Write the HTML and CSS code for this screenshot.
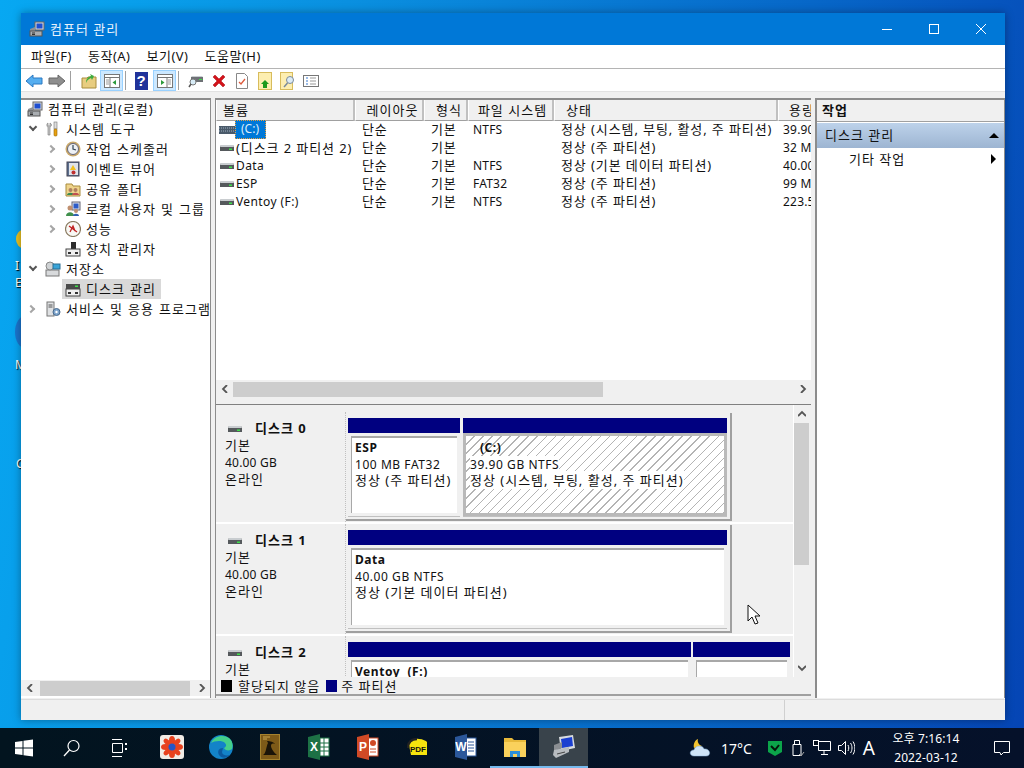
FILE: index.html
```html
<!DOCTYPE html>
<html lang="ko">
<head>
    <meta charset="UTF-8">
    <title>컴퓨터 관리</title>
    <link rel="stylesheet" href="styles.css">
</head>
<body>
    <svg class="defs" width="0" height="0">
        <symbol id="i-disk" viewBox="0 0 16 16">
            <path d="M2 5h12l1 2v4H1V7z" fill="#55595c"/>
            <path d="M2 5h12l1 2H1z" fill="#c9cdd0"/>
            <rect x="10" y="8.5" width="3" height="1.5" fill="#3fe04a"/>
        </symbol>
        <symbol id="i-pc" viewBox="0 0 16 16">
            <rect x="6" y="1" width="9" height="8" fill="#d5d8dc" stroke="#666"/>
            <rect x="7.5" y="2.5" width="6" height="5" fill="#1f4fd0"/>
            <path d="M1 8l5-2v6H1z" fill="#8d9196"/>
            <rect x="1" y="10" width="12" height="5" fill="#a9adb1" stroke="#555"/>
            <path d="M3 12h3M3 13.5h3" stroke="#333"/>
        </symbol>
    </svg>

    <div class="desk-icon desk-a"><span class="leaf"></span><span class="desk-txt">I<br>E</span></div>
    <div class="desk-icon desk-b"><span class="orb"></span><span class="desk-txt">M</span></div>
    <div class="desk-icon desk-c"><span class="desk-txt">C</span></div>

    <div class="window">
        <div class="titlebar">
            <svg class="title-icon" width="16" height="16"><use href="#i-pc"/></svg>
            <span class="title-text">컴퓨터 관리</span>
            <div class="win-btns">
                <span class="win-btn"><svg width="12" height="12"><path d="M1 6.5h10" stroke="#fff"/></svg></span>
                <span class="win-btn"><svg width="12" height="12"><rect x="1.5" y="1.5" width="9" height="9" fill="none" stroke="#fff"/></svg></span>
                <span class="win-btn"><svg width="12" height="12"><path d="M1 1l10 10M11 1L1 11" stroke="#fff"/></svg></span>
            </div>
        </div>

        <div class="menubar">
            <span>파일(F)</span><span>동작(A)</span><span>보기(V)</span><span>도움말(H)</span>
        </div>

        <div class="toolbar">
            <span class="tool"><svg width="18" height="16"><path d="M1 8l7-6v3h9v6H8v3z" fill="#55aef0" stroke="#2b78c2"/></svg></span>
            <span class="tool"><svg width="18" height="16"><path d="M17 8l-7-6v3H1v6h9v3z" fill="#8e8e8e" stroke="#666"/></svg></span>
            <span class="tool-sep sep-a"></span>
            <span class="tool"><svg width="16" height="16"><path d="M1 5h5l1-1h8v11H1z" fill="#e8cd80" stroke="#a98c3c"/><path d="M5 10c0-4 2-6 5-7l-1-2 4 2-2 4-1-2c-2 1-4 2-5 5z" fill="#3cab3c"/></svg></span>
            <span class="tool on"><svg width="16" height="14"><rect x=".5" y=".5" width="15" height="13" fill="#fff" stroke="#777"/><path d="M1 3.5h14M6 4v9" stroke="#777"/><path d="M2 6h3M2 8h3M2 10h3" stroke="#999"/><path d="M12 6v5L8.500 8.500z" fill="#2a9a3a"/></svg></span>
            <span class="tool-sep"></span>
            <span class="tool"><svg width="13" height="18"><rect width="13" height="18" fill="#20329a"/><text x="6.500" y="14" class="q">?</text></svg></span>
            <span class="tool on"><svg width="16" height="14"><rect x=".5" y=".5" width="15" height="13" fill="#fff" stroke="#777"/><path d="M1 3.500h14M10 4v9" stroke="#777"/><path d="M11 6h3M11 8h3M11 10h3" stroke="#999"/><path d="M4 6v5l3.500-2.500z" fill="#2a9a3a"/></svg></span>
            <span class="tool-sep sep-c"></span>
            <span class="tool"><svg width="16" height="16"><path d="M3 4h12v5H3z" fill="#6d7175"/><path d="M3 4h12l-1-1H4z" fill="#c9cdd0"/><rect x="11" y="6" width="3" height="1" fill="#3fe04a"/><circle cx="5" cy="9" r="3" fill="#d8ecf7" stroke="#777"/><path d="M3 11l-2 3" stroke="#555" stroke-width="1.500"/></svg></span>
            <span class="tool"><svg width="16" height="16"><path d="M2 4l2-2 4 4 4-4 2 2-4 4 4 4-2 2-4-4-4 4-2-2 4-4z" fill="#d3121a" stroke="#a80d12" stroke-width=".5"/></svg></span>
            <span class="tool"><svg width="14" height="16"><path d="M1.500.5h8l3 3v12h-11z" fill="#fff" stroke="#888"/><path d="M4 9l2 2 4-5" fill="none" stroke="#dd5a3c" stroke-width="1.300"/></svg></span>
            <span class="tool"><svg width="14" height="18"><rect x=".5" y=".5" width="13" height="17" fill="#fdeeb0" stroke="#d8bc5c"/><path d="M7 8l4 4H9v4H5v-4H3z" fill="#1c9a1c"/></svg></span>
            <span class="tool"><svg width="16" height="18"><rect x=".5" y=".5" width="12" height="17" fill="#fdeeb0" stroke="#d8bc5c"/><circle cx="10" cy="8" r="3.500" fill="#dcebf5" stroke="#7a8a99"/><path d="M7.500 11L4 15" stroke="#7a8a99" stroke-width="1.500"/></svg></span>
            <span class="tool"><svg width="16" height="12"><rect x=".5" y=".5" width="15" height="11" fill="#fff" stroke="#777"/><path d="M3 3h2M3 6h2M3 9h2" stroke="#3a7bd0" stroke-width="1.200"/><path d="M7 3h6M7 6h6M7 9h6" stroke="#999"/></svg></span>
        </div>

        <div class="panes">
            <div class="pane tree-pane">
                <div class="tree">
                    <div class="node lv0"><svg class="ico" width="16" height="16"><use href="#i-pc"/></svg><span>컴퓨터 관리(로컬)</span></div>
                    <div class="node lv1"><i class="tw down"></i>
                        <svg class="ico" width="16" height="16"><path d="M3 2c-2 1-1 4 0 4v8h2V6c2-1 2-3 0-4v3H3z" fill="#c8c8c8" stroke="#777" stroke-width=".6"/><rect x="9" y="1" width="3" height="7" fill="#ddd" stroke="#777" stroke-width=".6"/><rect x="9" y="8" width="3" height="7" rx="1" fill="#e8a010" stroke="#946404" stroke-width=".6"/></svg><span>시스템 도구</span></div>
                    <div class="node lv2"><i class="tw right"></i>
                        <svg class="ico" width="16" height="16"><circle cx="8" cy="8" r="7.500" fill="#c9a86a"/><circle cx="8" cy="8" r="5.500" fill="#eef1f5" stroke="#667"/><path d="M8 4v4l3 1" fill="none" stroke="#345" stroke-width="1.200"/></svg><span>작업 스케줄러</span></div>
                    <div class="node lv2"><i class="tw right"></i>
                        <svg class="ico" width="16" height="16"><rect x="2" y="1" width="12" height="14" fill="#5c7090" stroke="#445"/><rect x="4" y="2" width="9" height="12" fill="#dfe3ea"/><path d="M8 4l3 5H5z" fill="#f0c020"/><circle cx="8.500" cy="11.500" r="2" fill="#c03030"/></svg><span>이벤트 뷰어</span></div>
                    <div class="node lv2"><i class="tw right"></i>
                        <svg class="ico" width="16" height="16"><path d="M1 3h6l1 2h7v10H1z" fill="#efd48c" stroke="#a98c3c"/><circle cx="5.500" cy="9" r="2" fill="#b08060"/><path d="M2 14c0-3 7-3 7 0z" fill="#3a8a50"/><circle cx="10.500" cy="9" r="2" fill="#b08060"/><path d="M7 14c0-3 7-3 7 0z" fill="#c05050"/></svg><span>공유 폴더</span></div>
                    <div class="node lv2"><i class="tw right"></i>
                        <svg class="ico" width="16" height="16"><rect x="7" y="1" width="8" height="8" fill="#dfe3ea" stroke="#667"/><rect x="8.500" y="2.500" width="5" height="5" fill="#2d5cc8"/><circle cx="5" cy="7" r="2.500" fill="#c09070"/><path d="M1 15c0-5 8-5 8 0z" fill="#40904c"/><circle cx="11" cy="10" r="2" fill="#c09070"/><path d="M8 15c0-3 6-3 6 0z" fill="#3060b0"/></svg><span>로컬 사용자 및 그룹</span></div>
                    <div class="node lv2"><i class="tw right"></i>
                        <svg class="ico" width="16" height="16"><circle cx="8" cy="8" r="7.500" fill="#f8f8f4" stroke="#8a7a60" stroke-width="1.200"/><path d="M4 5l8 6M5 11l3-6 2 5" fill="none" stroke="#c02020" stroke-width="1.300"/></svg><span>성능</span></div>
                    <div class="node lv2 no-tw"><i class="tw"></i>
                        <svg class="ico" width="16" height="16"><rect x="6" y="1" width="5" height="7" fill="#2c2c2c"/><rect x="1" y="8" width="14" height="7" fill="#f0f0f0" stroke="#444"/><rect x="3" y="11" width="3" height="2" fill="#333"/><rect x="10" y="11" width="3" height="2" fill="#333"/></svg><span>장치 관리자</span></div>
                    <div class="node lv1"><i class="tw down"></i>
                        <svg class="ico" width="16" height="16"><rect x="1" y="9" width="13" height="6" fill="#d8dadc" stroke="#777"/><circle cx="5" cy="5" r="4" fill="#cfd2d4" stroke="#888"/><rect x="8" y="3" width="7" height="5" fill="#39a4d8" stroke="#2a6f94"/></svg><span>저장소</span></div>
                    <div class="node lv2 no-tw"><i class="tw"></i><span class="sel">
                        <svg class="ico" width="16" height="16"><path d="M1 3h14v5H1z" fill="#4a4a4a"/><rect x="10" y="4.500" width="3" height="1.500" fill="#3fe04a"/><rect x="1" y="8" width="14" height="7" fill="#f0f0f0" stroke="#444"/><rect x="3" y="11" width="3" height="2" fill="#333"/><rect x="10" y="11" width="3" height="2" fill="#333"/></svg><span>디스크 관리</span></span></div>
                    <div class="node lv1"><i class="tw right"></i>
                        <svg class="ico" width="16" height="16"><rect x="2" y="1" width="7" height="14" fill="#dfe1e3" stroke="#777"/><path d="M3.500 4h4M3.500 6h4" stroke="#555"/><circle cx="11.500" cy="11" r="3.500" fill="#7da4cc" stroke="#48698c"/><circle cx="11.500" cy="11" r="1.200" fill="#fff"/></svg><span>서비스 및 응용 프로그램</span></div>
                </div>
                <div class="hscroll">
                    <span class="arr"><svg width="8" height="8"><path d="M6 0L2 4l4 4" fill="none" stroke="#555" stroke-width="1.800"/></svg></span>
                    <span class="track"><span class="thumb tree-thumb"></span></span>
                    <span class="arr"><svg width="8" height="8"><path d="M2 0l4 4-4 4" fill="none" stroke="#555" stroke-width="1.800"/></svg></span>
                </div>
            </div>

            <div class="pane mid-pane">
                <div class="list">
                    <div class="vol-head">
                        <span>볼륨</span><span class="ctr">레이아웃</span><span class="ctr">형식</span><span class="ctr">파일 시스템</span><span class="pad">상태</span><span class="cap">용량</span>
                    </div>
                    <div class="vol-row">
                        <span class="vol"><svg class="hatch-ico" width="16" height="8"><rect width="16" height="8" fill="#4a5a6a"/><path d="M0 2h16M0 5h16" stroke="#9fb0c0" stroke-dasharray="1 1"/></svg><em class="vol-sel">(C:)</em></span><span>단순</span><span>기본</span><span class="en">NTFS</span><span>정상 (시스템, 부팅, 활성, 주 파티션)</span><span class="en">39.90 GB</span>
                    </div>
                    <div class="vol-row">
                        <span class="vol"><svg width="16" height="16"><use href="#i-disk"/></svg>(디스크 2 파티션 2)</span><span>단순</span><span>기본</span><span class="en"></span><span>정상 (주 파티션)</span><span class="en">32 MB</span>
                    </div>
                    <div class="vol-row">
                        <span class="vol en"><svg width="16" height="16"><use href="#i-disk"/></svg>Data</span><span>단순</span><span>기본</span><span class="en">NTFS</span><span>정상 (기본 데이터 파티션)</span><span class="en">40.00 GB</span>
                    </div>
                    <div class="vol-row">
                        <span class="vol en"><svg width="16" height="16"><use href="#i-disk"/></svg>ESP</span><span>단순</span><span>기본</span><span class="en">FAT32</span><span>정상 (주 파티션)</span><span class="en">99 MB</span>
                    </div>
                    <div class="vol-row">
                        <span class="vol en"><svg width="16" height="16"><use href="#i-disk"/></svg>Ventoy (F:)</span><span>단순</span><span>기본</span><span class="en">NTFS</span><span>정상 (주 파티션)</span><span class="en">223.57 GB</span>
                    </div>
                </div>
                <div class="hscroll">
                    <span class="arr"><svg width="8" height="8"><path d="M6 0L2 4l4 4" fill="none" stroke="#555" stroke-width="1.800"/></svg></span>
                    <span class="track"><span class="thumb list-thumb"></span></span>
                    <span class="arr"><svg width="8" height="8"><path d="M2 0l4 4-4 4" fill="none" stroke="#555" stroke-width="1.800"/></svg></span>
                </div>
                <div class="splitter"></div>

                <div class="disk-view">
                    <div class="disks">
                        <div class="disk d0">
                            <div class="disk-info">
                                <div class="disk-name"><svg width="16" height="16"><use href="#i-disk"/></svg><b>디스크 0</b></div>
                                <div>기본</div><div class="en">40.00 GB</div><div>온라인</div>
                            </div>
                            <div class="parts">
                                <div class="part p-esp">
                                    <div class="bar"></div>
                                    <div class="box"><div class="box-in">
                                        <b class="en">ESP</b><span class="en">100 MB FAT32</span><span>정상 (주 파티션)</span>
                                    </div></div>
                                </div>
                                <div class="part p-c">
                                    <div class="bar"></div>
                                    <div class="box picked"><div class="box-in hatch">
                                        <b class="en c-name">(C:)</b><span class="en"><i>39.90 GB NTFS</i></span><span><i>정상 (시스템, 부팅, 활성, 주 파티션)</i></span>
                                    </div></div>
                                </div>
                            </div>
                        </div>
                        <div class="disk d1">
                            <div class="disk-info">
                                <div class="disk-name"><svg width="16" height="16"><use href="#i-disk"/></svg><b>디스크 1</b></div>
                                <div>기본</div><div class="en">40.00 GB</div><div>온라인</div>
                            </div>
                            <div class="parts">
                                <div class="part p-data">
                                    <div class="bar"></div>
                                    <div class="box"><div class="box-in">
                                        <b class="en">Data</b><span class="en">40.00 GB NTFS</span><span>정상 (기본 데이터 파티션)</span>
                                    </div></div>
                                </div>
                            </div>
                        </div>
                        <div class="disk d2">
                            <div class="disk-info">
                                <div class="disk-name"><svg width="16" height="16"><use href="#i-disk"/></svg><b>디스크 2</b></div>
                                <div>기본</div>
                            </div>
                            <div class="parts">
                                <div class="part p-vt">
                                    <div class="bar"></div>
                                    <div class="box"><div class="box-in"><b class="en">Ventoy&nbsp; (F:)</b></div></div>
                                </div>
                                <div class="part p-small">
                                    <div class="bar"></div>
                                    <div class="box"><div class="box-in"></div></div>
                                </div>
                            </div>
                        </div>
                    </div>
                    <div class="vscroll">
                        <span class="arr"><svg width="8" height="8"><path d="M0 6l4-4 4 4" fill="none" stroke="#555" stroke-width="1.800"/></svg></span>
                        <span class="vtrack"><span class="vthumb"></span></span>
                        <span class="arr"><svg width="8" height="8"><path d="M0 2l4 4 4-4" fill="none" stroke="#555" stroke-width="1.800"/></svg></span>
                    </div>
                </div>
                <div class="legend">
                    <i class="sw black"></i><span>할당되지 않음</span><i class="sw navy"></i><span>주 파티션</span>
                </div>
            </div>

            <div class="pane act-pane">
                <div class="act-head"><b>작업</b></div>
                <div class="act-sec"><span>디스크 관리</span><i class="tri-up"></i></div>
                <div class="act-item"><span>기타 작업</span><i class="tri-right"></i></div>
            </div>
        </div>

        <div class="statusbar"><span class="st-a"></span><span class="st-b"></span></div>
    </div>

    <svg class="cursor" width="14" height="22"><path d="M1 1v16l4-4 3 7 3-1-3-7h5z" fill="#fff" stroke="#111"/></svg>

    <div class="taskbar">
        <span class="tb-btn"><svg width="18" height="18"><path d="M0 3l7.500-1v6.500H0zM8.500 1.800L18 .5v8H8.500zM0 9.500h7.500V16L0 15zM8.500 9.500H18v8l-9.500-1.300z" fill="#fff"/></svg></span>
        <span class="tb-btn"><svg width="18" height="18"><circle cx="10.500" cy="7" r="5.500" fill="none" stroke="#fff" stroke-width="1.200"/><path d="M6.500 11L1 17" stroke="#fff" stroke-width="1.300"/></svg></span>
        <span class="tb-btn"><svg width="16" height="18"><path d="M0 .5h10M0 17.500h10M.5 4.500h10v9H.5z" fill="none" stroke="#fff"/><rect x="13" y="4" width="2" height="2" fill="#fff"/><rect x="13" y="9" width="2" height="2" fill="#fff"/></svg></span>
        <span class="tb-app first"><svg width="24" height="24"><rect width="24" height="24" rx="3" fill="#f1ece6"/><g fill="#e8421e"><ellipse cx="12" cy="5.500" rx="3" ry="4.500"/><ellipse cx="12" cy="18.500" rx="3" ry="4.500"/><ellipse cx="5.500" cy="12" rx="4.500" ry="3"/><ellipse cx="18.500" cy="12" rx="4.500" ry="3"/><ellipse cx="7" cy="7" rx="2.500" ry="4" transform="rotate(-45 7 7)"/><ellipse cx="17" cy="17" rx="2.500" ry="4" transform="rotate(-45 17 17)"/><ellipse cx="17" cy="7" rx="2.500" ry="4" transform="rotate(45 17 7)"/><ellipse cx="7" cy="17" rx="2.500" ry="4" transform="rotate(45 7 17)"/></g><circle cx="12" cy="12" r="3.500" fill="#2456c8"/></svg></span>
        <span class="tb-app"><svg width="24" height="24"><circle cx="12" cy="12" r="12" fill="#1383c8"/><path d="M2 8C5 1 14-1 20 3c4 3 4 8 3 11-2 2-7 2-8-1 2-1 3-3 1-5-3-3-11-2-14 0z" fill="#44cf8a"/><path d="M14 13c-4 0-6 3-4 7 2 3 7 4 11 0-4 1-8 0-8-3z" fill="#0c5aa0"/></svg></span>
        <span class="tb-app"><svg width="20" height="26"><rect x=".5" y=".5" width="19" height="25" fill="#7d5a18" stroke="#a4822e"/><path d="M3 21c3-1 3-8 5-12l-1-2c3 0 7 1 8 3-3-1-4 0-4 2s3 7 6 9z" fill="#1a1408"/><path d="M3 3h7M3 5h4" stroke="#c9a650"/></svg></span>
        <span class="tb-app"><svg width="22" height="26"><rect x="8" y="4" width="13" height="18" fill="#fff" stroke="#1d7145"/><path d="M12 4v18M16 4v18M8 9h13M8 13h13M8 17h13" stroke="#1d7145"/><path d="M0 3l12-3v26L0 23z" fill="#1d7145"/><text x="6" y="17" class="ap">X</text></svg></span>
        <span class="tb-app"><svg width="22" height="26"><rect x="8" y="4" width="13" height="18" fill="#fff" stroke="#d04a26"/><path d="M13 15h6M13 18h6" stroke="#d04a26"/><circle cx="16" cy="9" r="3" fill="#d04a26"/><path d="M0 3l12-3v26L0 23z" fill="#d04a26"/><text x="6" y="17" class="ap">P</text></svg></span>
        <span class="tb-app"><svg width="20" height="18"><path d="M2 7c0-5 6-7 10-6 4 0 7 2 8 3v13H4z" fill="#f6e30e"/><path d="M1 10C1 4 5 1 10 1" fill="none" stroke="#222" stroke-width="2.500"/><text x="11" y="14" class="pdf">PDF</text></svg></span>
        <span class="tb-app"><svg width="22" height="26"><rect x="8" y="4" width="13" height="18" fill="#fff" stroke="#2b579a"/><path d="M13 8h6M13 11h6M13 14h6M13 17h6" stroke="#2b579a"/><path d="M0 3l12-3v26L0 23z" fill="#2b579a"/><text x="6" y="17" class="ap">W</text></svg></span>
        <span class="tb-app open"><svg width="22" height="20"><path d="M0 1h8l2 2h12v4H0z" fill="#e8b93a"/><rect y="5" width="22" height="15" fill="#fad15c"/><path d="M6 20v-6h10v6h-3v-3H9v3z" fill="#2d8fd8"/></svg></span>
        <span class="tb-app active"><svg width="26" height="26"><path d="M8 3l14-2 2 13-14 3z" fill="#d8dce0"/><path d="M10 5l11-2 1 9-11 2z" fill="#1b3fd0"/><path d="M3 11l8-3v6l-8 3z" fill="#8a8e92"/><path d="M3 16l15-3v5L5 24l-3-3z" fill="#b8bcc0"/><path d="M6 20l8-2" stroke="#444"/></svg></span>

        <div class="tray">
            <span class="tray-ico"><svg width="24" height="22"><path d="M9 2c-3 1-5 5-4 9l8-2c-3-1-5-4-4-7z" fill="#f2c32f"/><path d="M5 19c-5 0-5-6 0-6 1-5 9-5 10-1 6-1 8 7 2 7z" fill="#cfe4f7" stroke="#8ab4dc" stroke-width=".5"/></svg></span>
            <span class="temp">17°C</span>
            <span class="tray-ico t-shield"><svg width="14" height="16"><path d="M0 1h14v11l-7 4-7-4z" fill="#0ca44a"/><path d="M3 6l4 4 4-5" fill="none" stroke="#04150a" stroke-width="2"/></svg></span>
            <span class="tray-ico t-usb"><svg width="14" height="18"><path d="M3.500 1.500h5v4h-5zM2 5.500h8v11H2z" fill="none" stroke="#fff"/><path d="M8 15l2 2 3-4" fill="none" stroke="#aaa"/></svg></span>
            <span class="tray-ico t-net"><svg width="18" height="16"><path d="M5.500 1.500h12v9h-12zM11 11v3M8 14.500h7" fill="none" stroke="#fff"/><rect x=".5" y=".5" width="5" height="5" fill="#06101e" stroke="#fff"/></svg></span>
            <span class="tray-ico t-vol"><svg width="17" height="14"><path d="M.5 4.500h3l4-4v13l-4-4h-3z" fill="none" stroke="#fff"/><path d="M10 4c1 2 1 4 0 6M12.500 2c2 3 2 7 0 10M15 .5c2.500 4 2.500 9 0 13" fill="none" stroke="#fff"/></svg></span>
            <span class="ime">A</span>
            <div class="clock"><span>오후 7:16:14</span><span>2022-03-12</span></div>
            <span class="tray-ico t-note"><svg width="16" height="15"><path d="M.5.500h15v11H9.500L7 14l-1-2.500H.5z" fill="none" stroke="#fff"/></svg></span>
        </div>
    </div>
</body>
</html>
```
FILE: styles.css
```css
html, body {
    margin: 0;
    height: 100%;
}

body {
    width: 1024px;
    height: 768px;
    overflow: hidden;
    position: relative;
    font-family: "Noto Sans", "Noto Sans CJK KR", sans-serif;
    font-size: 13px;
    letter-spacing: 1px;
    color: #111;
    background: linear-gradient(100deg, #07a8f2 0%, #0a90e0 30%, #0767c8 70%, #0544b4 100%);
}

.defs {
    position: absolute;
}

.en {
    font-size: 12px;
    letter-spacing: 0.2px;
}

b.en {
    letter-spacing: 0.3px;
}

/* desktop scraps left of the window */
.desk-icon {
    position: absolute;
    left: 0;
    width: 21px;
    overflow: hidden;
    color: #fff;
    font-size: 12px;
    letter-spacing: 0;
    text-shadow: 1px 1px 1px #000;
}

.desk-a { top: 230px; height: 62px; }
.desk-b { top: 316px; height: 56px; }
.desk-c { top: 455px; height: 18px; }

.desk-txt {
    position: absolute;
    left: 15px;
    line-height: 17px;
}

.desk-a .desk-txt { top: 27px; }
.desk-b .desk-txt { top: 40px; }
.desk-c .desk-txt { top: 0; left: 16px; }

.leaf {
    position: absolute;
    left: 16px;
    top: 0;
    width: 14px;
    height: 18px;
    border-radius: 50%;
    background: #e8c020;
}

.orb {
    position: absolute;
    left: 15px;
    top: 0;
    width: 20px;
    height: 32px;
    border-radius: 50%;
    background: #1a74cc;
}

/* window */
.window {
    position: absolute;
    left: 21px;
    top: 13px;
    width: 984px;
    height: 707px;
    display: flex;
    flex-direction: column;
    background: #f0f0f0;
    box-shadow: 0 0 8px rgba(0, 0, 0, 0.35);
}

.titlebar {
    height: 32px;
    flex: none;
    display: flex;
    align-items: center;
    background: #0078d7;
    color: #fff;
}

.title-icon {
    margin: 0 5px 0 8px;
}

.title-text {
    flex: 1;
    color: #e8f2fb;
    padding-bottom: 2px;
}

.win-btns {
    display: flex;
    margin-right: 1px;
}

.win-btn {
    width: 47px;
    height: 32px;
    display: flex;
    align-items: center;
    justify-content: center;
}

.menubar {
    height: 21px;
    flex: none;
    display: flex;
    align-items: center;
    gap: 16px;
    padding-left: 10px;
    padding-bottom: 2px;
    background: #fff;
    border-bottom: 1px solid #b4b4b4;
    letter-spacing: 0.5px;
}

.toolbar {
    height: 22px;
    flex: none;
    display: flex;
    align-items: flex-start;
    padding-left: 1px;
    background: #fff;
    border-bottom: 1px solid #e2e2e2;
}

.tool {
    width: 23px;
    height: 21px;
    margin-top: 1px;
    padding-top: 1px;
    display: flex;
    align-items: center;
    justify-content: center;
    box-sizing: border-box;
}

.tool.on {
    background: #cce8ff;
    border: 1px solid #99d1ff;
}

.tool-sep {
    width: 1px;
    height: 19px;
    margin: 2px 4px 0 2px;
    background: #a0a0a0;
}

.sep-a { margin-right: 6px; }
.sep-c { margin-right: 5px; }

.q {
    font: bold 15px "Liberation Sans", sans-serif;
    fill: #fff;
    text-anchor: middle;
}

.panes {
    flex: 1;
    min-height: 0;
    display: flex;
    gap: 4px;
    padding-top: 6px;
    padding-bottom: 1px;
}

.pane {
    display: flex;
    flex-direction: column;
    box-sizing: border-box;
    background: #fff;
    border-top: 2px solid #8c8c8c;
    border-left: 1px solid #8c8c8c;
    overflow: hidden;
}

.tree-pane {
    width: 190px;
    border-left: 0;
    border-right: 1px solid #8c8c8c;
}

.mid-pane {
    width: 596px;
    background: #f0f0f0;
}

.act-pane {
    width: 190px;
    border-left: 2px solid #8c8c8c;
    border-right: 1px solid #8c8c8c;
}

/* tree */
.tree {
    flex: 1;
    overflow: hidden;
    margin-top: -1px;
    white-space: nowrap;
    word-spacing: 0.7px;
}

.node {
    height: 20px;
    display: flex;
    align-items: center;
}

.node > span,
.sel > span {
    padding-bottom: 2px;
}

.node .ico {
    flex: none;
    margin-right: 5px;
}

.lv0 { padding-left: 6px; }
.lv1 { padding-left: 7px; }
.lv2 { padding-left: 27px; }

.tw {
    flex: none;
    width: 11px;
    height: 11px;
    margin-right: 6px;
    position: relative;
}

.tw.down::after,
.tw.right::after {
    content: "";
    position: absolute;
    width: 6px;
    height: 6px;
    box-sizing: border-box;
    border-right: 2px solid #555;
    border-bottom: 2px solid #555;
}

.tw.down::after {
    left: 2px;
    top: 0;
    transform: rotate(45deg);
}

.tw.right::after {
    left: 0;
    top: 2px;
    border-color: #a6a6a6;
    transform: rotate(-45deg);
}

.node .sel {
    display: inline-flex;
    align-items: center;
    height: 20px;
    padding: 0 5px 0 3px;
    margin-left: -3px;
    background: #d9d9d9;
}

/* scrollbars */
.hscroll {
    height: 18px;
    flex: none;
    display: flex;
    align-items: center;
    background: #f0f0f0;
}

.tree-pane .hscroll {
    height: 16px;
    margin-bottom: 2px;
}

.arr {
    width: 17px;
    height: 16px;
    flex: none;
    display: flex;
    align-items: center;
    justify-content: center;
}

.track {
    flex: 1;
    height: 15px;
    display: block;
}

.thumb {
    display: block;
    height: 100%;
    background: #cdcdcd;
}

.tree-thumb { width: 150px; margin-left: 2px; }
.list-thumb { width: 370px; }

/* volume list */
.list {
    height: 280px;
    flex: none;
    overflow: hidden;
    background: #fff;
}

.vol-head,
.vol-row {
    display: grid;
    grid-template-columns: 139px 69px 44px 86px 224px 90px;
    white-space: nowrap;
}

.vol-head {
    height: 21px;
    align-items: center;
    background: #f0f0f0;
}

.vol-head span {
    height: 21px;
    line-height: 20px;
    box-sizing: border-box;
    padding-left: 6px;
    border-right: 2px solid #c0c0c0;
    border-bottom: 1px solid #a0a0a0;
    border-left: 1px solid #fff;
    overflow: hidden;
}

.vol-head .ctr {
    text-align: center;
    padding-left: 7px;
}

.vol-head .ctr:nth-child(4) {
    padding-left: 4px;
}

.vol-head .pad {
    padding-left: 11px;
}

.vol-head .cap {
    padding-left: 10px;
}

.vol-row {
    height: 18px;
    line-height: 18px;
    letter-spacing: 0.9px;
}

.vol-row span {
    padding-left: 7px;
    overflow: hidden;
}

.vol-row span:not(.en) {
    margin-top: -1px;
}

.vol-row span:nth-child(4) {
    padding-left: 5px;
}

.vol-row span:last-child {
    padding-left: 5px;
}

.vol-row .vol {
    display: flex;
    align-items: center;
    padding-left: 3px;
    margin-top: 0;
}

.vol.en {
    letter-spacing: 0.4px;
}

.vol svg {
    flex: none;
    margin-right: 1px;
}

.vol-sel {
    align-self: stretch;
    font-style: normal;
    font-size: 12px;
    letter-spacing: 0;
    background: #0078d7;
    color: #dcecfa;
    padding: 0 7px 0 6px;
    margin-left: -1px;
    outline: 1px dotted #e8a040;
    outline-offset: -1px;
}

.splitter {
    height: 6px;
    flex: none;
    background: #f0f0f0;
    border-bottom: 1px solid #808080;
}

/* disk map */
.disk-view {
    flex: 1;
    min-height: 0;
    display: flex;
    background: #f0f0f0;
}

.disks {
    flex: 1;
    overflow: hidden;
}

.disk {
    display: flex;
    height: 110px;
    border-bottom: 2px solid #fff;
}

.d0 {
    margin-top: 7px;
}

.disk-info {
    width: 130px;
    flex: none;
    box-sizing: border-box;
    padding: 5px 0 0 9px;
    line-height: 17px;
    border-right: 1px dotted #c0c0c0;
}

.disk-name {
    display: flex;
    align-items: center;
    height: 23px;
    gap: 12px;
    padding-left: 2px;
    margin-bottom: -3px;
}

.parts {
    width: 386px;
    height: 108px;
    margin-top: 1px;
    flex: none;
    display: flex;
    gap: 3px;
    box-sizing: border-box;
    padding: 5px 3px 2px 2px;
    border-right: 2px solid #a0a0a0;
    border-bottom: 2px solid #a0a0a0;
}

.part {
    display: flex;
    flex-direction: column;
}

.p-esp { width: 112px; flex: none; }
.p-c { width: 264px; flex: none; }
.p-data { width: 379px; flex: none; }
.p-vt { width: 343px; flex: none; }
.p-small { width: 97px; flex: none; }

.d2 .parts {
    width: 446px;
    gap: 2px;
    border: 0;
}

.bar {
    height: 15px;
    flex: none;
    background: #000080;
}

.box {
    flex: 1;
    padding: 3px;
    background: #f0f0f0;
    border-bottom: 1px solid #c0c0c0;
    min-height: 0;
}

.box-in {
    height: 100%;
    box-sizing: border-box;
    display: flex;
    flex-direction: column;
    padding: 1px 0 0 3px;
    line-height: 17px;
    background: #fff;
    border-top: 2px solid #a8a8a8;
    border-left: 1px solid #a8a8a8;
    white-space: nowrap;
}

.box-in .en {
    letter-spacing: 0.55px;
}

.box-in > span:last-child {
    margin-top: -1px;
}

.picked {
    background: #b9b9b9;
}

.box-in.hatch {
    border: 0;
    padding-left: 4px;
    padding-top: 3px;
    background: repeating-linear-gradient(135deg, #fff 0, #fff 5.4px, #b4b4b4 5.4px, #b4b4b4 6.4px);
}

.hatch span {
    align-self: flex-start;
}

.hatch i {
    font-style: normal;
    background: #fff;
}

.c-name {
    padding-left: 10px;
    align-self: flex-start;
}

.vscroll {
    width: 16px;
    flex: none;
    margin-right: 2px;
    display: flex;
    flex-direction: column;
    border-left: 1px solid #fff;
    box-sizing: border-box;
}

.vtrack {
    flex: 1;
    display: block;
}

.vthumb {
    display: block;
    height: 142px;
    background: #cdcdcd;
}

.vscroll .arr {
    height: 18px;
    width: 15px;
}

.legend {
    height: 19px;
    flex: none;
    margin-bottom: 2px;
    display: flex;
    align-items: center;
    padding-left: 5px;
    background: #f0f0f0;
    border-bottom: 2px solid #a0a0a0;
    box-sizing: border-box;
}

.sw {
    width: 11px;
    height: 12px;
    margin-right: 6px;
    display: block;
}

.sw.black { background: #000; }
.sw.navy { background: #000080; margin-left: 6px; margin-right: 4px; }

/* actions */
.act-head {
    height: 21px;
    line-height: 21px;
    padding-left: 5px;
    background: #f0f0f0;
    border-bottom: 1px solid #a0a0a0;
}

.act-sec {
    height: 25px;
    margin-top: 1px;
    display: flex;
    align-items: center;
    justify-content: space-between;
    padding: 0 4px 0 8px;
    background: linear-gradient(#bdd2ea, #9db5d2);
}

.act-sec span,
.act-item span {
    padding-bottom: 2px;
}

.tri-up {
    border-left: 5px solid transparent;
    border-right: 5px solid transparent;
    border-bottom: 5px solid #000;
    margin-right: 1px;
}

.act-item {
    height: 22px;
    display: flex;
    align-items: center;
    justify-content: space-between;
    padding: 0 8px 0 32px;
}

.tri-right {
    border-top: 5px solid transparent;
    border-bottom: 5px solid transparent;
    border-left: 5px solid #000;
}

.statusbar {
    height: 21px;
    flex: none;
    display: flex;
    background: #f0f0f0;
    border-top: 1px solid #dcdcdc;
    box-sizing: border-box;
}

.st-a {
    width: 763px;
    border-right: 1px solid #d0d0d0;
}

.cursor {
    position: absolute;
    left: 747px;
    top: 604px;
}

/* taskbar */
.taskbar {
    position: absolute;
    left: 0;
    bottom: 0;
    width: 1024px;
    height: 40px;
    display: flex;
    align-items: stretch;
    background: linear-gradient(90deg, #02141f, #05112a);
    color: #fff;
    font-size: 12px;
    letter-spacing: 0;
}

.tb-btn {
    width: 48px;
    display: flex;
    align-items: center;
    justify-content: center;
}

.tb-app {
    width: 49px;
    display: flex;
    align-items: center;
    justify-content: center;
    box-sizing: border-box;
    border-bottom: 2px solid transparent;
}

.tb-app.first {
    margin-left: 3px;
}

.tb-app.open {
    border-bottom-color: #76b9ed;
}

.tb-app.active {
    background: #39434b;
    border-bottom-color: #76b9ed;
}

.tray {
    flex: 1;
    display: flex;
    align-items: center;
    padding-left: 101px;
}

.tray-ico {
    display: flex;
    align-items: center;
    justify-content: center;
}

.temp {
    margin: 0 16px 0 8px;
    font-size: 14px;
}

.t-usb { margin-left: 9px; }
.t-net { margin-left: 8px; }
.t-vol { margin-left: 7px; }

.ime {
    font-size: 19px;
    margin-left: 8px;
    line-height: 1;
}

.clock {
    width: 90px;
    margin-left: 6px;
    display: flex;
    flex-direction: column;
    align-items: center;
    line-height: 19px;
    letter-spacing: 0.1px;
}

.t-note {
    margin-left: 23px;
}

.ap {
    font: bold 12px "Liberation Sans", sans-serif;
    fill: #fff;
    text-anchor: middle;
}

.pdf {
    font: bold 8px "Liberation Sans", sans-serif;
    fill: #111;
    text-anchor: middle;
}
```
